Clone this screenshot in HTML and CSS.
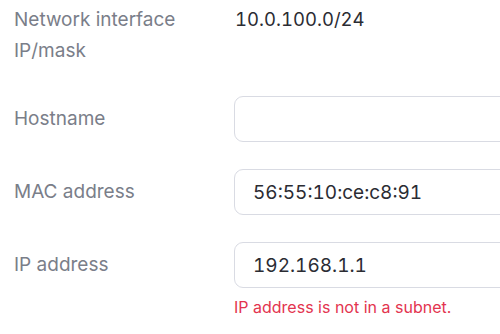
FILE: index.html
```html
<!DOCTYPE html>
<html lang="en">
<head>
<meta charset="UTF-8">
<meta name="viewport" content="width=device-width, initial-scale=1.0">
<title>Network settings</title>
<link rel="stylesheet" href="styles.css">
</head>
<body>
<div id="settings">
  <div class="row info-row">
    <div class="label">Network interface<br>IP/mask</div>
    <div class="value">10.0.100.0/24</div>
  </div>
  <div class="row field-row">
    <label class="label" for="hostname">Hostname</label>
    <div class="field">
      <input type="text" id="hostname" value="">
    </div>
  </div>
  <div class="row field-row">
    <label class="label" for="mac">MAC address</label>
    <div class="field">
      <input type="text" id="mac" value="56:55:10:ce:c8:91">
    </div>
  </div>
  <div class="row field-row">
    <label class="label" for="ip">IP address</label>
    <div class="field">
      <input type="text" id="ip" value="192.168.1.1">
      <div class="error">IP address is not in a subnet.</div>
    </div>
  </div>
</div>
</body>
</html>
```

FILE: styles.css
```css
html, body {
  margin: 0;
  overflow: hidden;
}
body {
  font-family: Inter, "Noto Sans", sans-serif;
  background-color: #fff;
  color: #2b2c33;
}
#settings {
  padding: 4px 0 0 14px;
  display: flex;
  flex-direction: column;
  gap: 27px;
}
.row {
  display: grid;
  grid-template-columns: 220px 266px;
  align-items: start;
}
.info-row {
  margin-bottom: 3px;
}
.label {
  font-size: 19px;
  line-height: 31px;
  color: #7a7e89;
}
.value {
  font-size: 18.5px;
  line-height: 31px;
  padding-left: 1px;
  font-variant-numeric: tabular-nums;
}
.field-row .label {
  line-height: 46px;
}
input {
  box-sizing: border-box;
  width: calc(100% + 12px);
  height: 46px;
  padding: 0 18px;
  font-family: inherit;
  font-size: 19px;
  font-variant-numeric: tabular-nums;
  color: #2b2c33;
  border: 1.5px solid #d9dbe3;
  border-radius: 9px;
  outline: none;
  background: #fff;
}
.error {
  margin-top: 9px;
  font-size: 16px;
  color: #e3344f;
}
```
